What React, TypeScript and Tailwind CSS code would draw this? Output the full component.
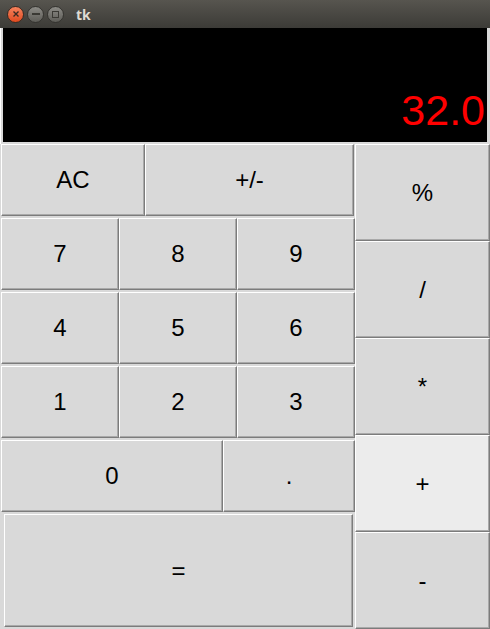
import React from "react";

const font = { fontFamily: '"Liberation Sans", Arial, sans-serif' };

function Btn({ label, w, h, active, className = "" }: { label: string; w: number; h: number; active?: boolean; className?: string }) {
  return (
    <div
      className={`flex items-center justify-center border-t border-l border-b border-r border-t-white border-l-white border-b-[#7c7c7c] border-r-[#7c7c7c] shadow-[inset_-1px_-1px_0_#a9a9a9] text-[24px] text-black ${active ? "bg-[#ececec]" : "bg-[#d9d9d9]"} ${className}`}
      style={{ width: w, height: h, ...font }}
    >
      {label}
    </div>
  );
}

export default function App() {
  return (
    <div className="w-[490px] h-[629px] bg-[#d9d9d9] flex flex-col overflow-hidden">
      {/* title bar */}
      <div className="h-[28px] bg-gradient-to-b from-[#57554f] to-[#3c3b37] flex items-center pl-[7px] gap-[3px]">
        <div className="w-[17px] h-[17px] rounded-full bg-gradient-to-b from-[#f5825c] to-[#e0491c] border border-[#3a2a22] flex items-center justify-center">
          <svg width="8" height="8" viewBox="0 0 8 8"><path d="M1.5 1.5 L6.5 6.5 M6.5 1.5 L1.5 6.5" stroke="#3b2a22" strokeWidth="1.4" /></svg>
        </div>
        <div className="w-[17px] h-[17px] rounded-full bg-gradient-to-b from-[#8c8b86] to-[#5e5d58] border border-[#34332f] flex items-center justify-center">
          <div className="w-[8px] h-[2px] bg-[#3a3934]" />
        </div>
        <div className="w-[17px] h-[17px] rounded-full bg-gradient-to-b from-[#8c8b86] to-[#5e5d58] border border-[#34332f] flex items-center justify-center">
          <div className="w-[7px] h-[7px] border-[1.5px] border-[#3a3934]" />
        </div>
        <span className="ml-[9px] text-[14px] font-bold text-[#dfdbd2]" style={{ fontFamily: '"Noto Sans", "DejaVu Sans", sans-serif' }}>tk</span>
      </div>
      {/* display */}
      <div className="h-[116px] flex pl-[2px] border-l border-l-white">
        <div className="w-[484px] h-[114px] bg-black flex items-end justify-end pr-[2px]">
          <span className="text-[#ff0000] text-[43px] leading-none mb-[10px]" style={font}>32.0</span>
        </div>
      </div>
      {/* keypad */}
      <div className="flex">
        <div className="w-[355px] flex flex-col">
          <div className="h-[74px] flex pl-[1px]">
            <Btn label="AC" w={144} h={72} />
            <Btn label="+/-" w={209} h={72} />
          </div>
          <div className="h-[74px] flex pl-[1px]">
            <Btn label="7" w={118} h={72} />
            <Btn label="8" w={118} h={72} />
            <Btn label="9" w={118} h={72} />
          </div>
          <div className="h-[74px] flex pl-[1px]">
            <Btn label="4" w={118} h={72} />
            <Btn label="5" w={118} h={72} />
            <Btn label="6" w={118} h={72} />
          </div>
          <div className="h-[74px] flex pl-[1px]">
            <Btn label="1" w={118} h={72} />
            <Btn label="2" w={118} h={72} />
            <Btn label="3" w={118} h={72} />
          </div>
          <div className="h-[74px] flex pl-[1px]">
            <Btn label="0" w={222} h={72} />
            <Btn label="." w={132} h={72} />
          </div>
          <div className="h-[115px] flex pl-[4px]">
            <Btn label="=" w={349} h={113} />
          </div>
        </div>
        <div className="flex flex-col">
          <Btn label="%" w={135} h={97} />
          <Btn label="/" w={135} h={97} />
          <Btn label="*" w={135} h={97} />
          <Btn label="+" w={135} h={97} active />
          <Btn label="-" w={135} h={97} />
        </div>
      </div>
    </div>
  );
}
